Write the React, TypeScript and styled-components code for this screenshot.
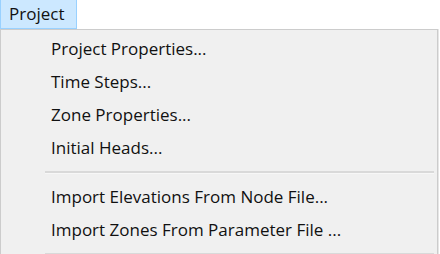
import React from "react";
import styled, { createGlobalStyle } from "styled-components";

const GlobalStyle = createGlobalStyle`
  html, body {
    margin: 0;
    padding: 0;
    background: #ffffff;
  }
  body {
    font-family: "Open Sans", "Noto Sans", "Liberation Sans", sans-serif;
    color: #111111;
  }
`;

const Wrapper = styled.div`
  width: 440px;
  height: 254px;
  overflow: hidden;
  display: flex;
  flex-direction: column;
`;

const MenuBar = styled.div`
  height: 29px;
  display: flex;
  align-items: stretch;
`;

const MenuTitle = styled.div`
  box-sizing: border-box;
  width: 77px;
  height: 29px;
  padding: 2px 0 0 8px;
  background: #cce8ff;
  border: 1px solid #99d1ff;
  border-top: none;
  font-size: 17px;
  line-height: 24px;
`;

const Dropdown = styled.div`
  box-sizing: border-box;
  width: 438px;
  flex: 1;
  background: #f0f0f0;
  border: 1px solid #cccccc;
  border-bottom: none;
  box-shadow: 1px 0 0 #e6e6e6;
  padding-top: 2px;
  display: flex;
  flex-direction: column;
`;

const Item = styled.div`
  height: 33px;
  padding-left: 50px;
  display: flex;
  align-items: center;
  font-size: 17px;
  white-space: nowrap;
`;

const Separator = styled.div`
  flex-shrink: 0;
  height: 2px;
  margin: 7px 3px 6px 44px;
  background: #d9d9d9;
  border-bottom: 1px solid #f7f7f7;
`;

const groups = [
  ["Project Properties...", "Time Steps...", "Zone Properties...", "Initial Heads..."],
  ["Import Elevations From Node File...", "Import Zones From Parameter File ..."],
];

export default function App() {
  return (
    <Wrapper>
      <GlobalStyle />
      <MenuBar>
        <MenuTitle>Project</MenuTitle>
      </MenuBar>
      <Dropdown>
        {groups.map((group, i) => (
          <React.Fragment key={i}>
            {group.map((label) => (
              <Item key={label}>{label}</Item>
            ))}
            <Separator />
          </React.Fragment>
        ))}
      </Dropdown>
    </Wrapper>
  );
}
